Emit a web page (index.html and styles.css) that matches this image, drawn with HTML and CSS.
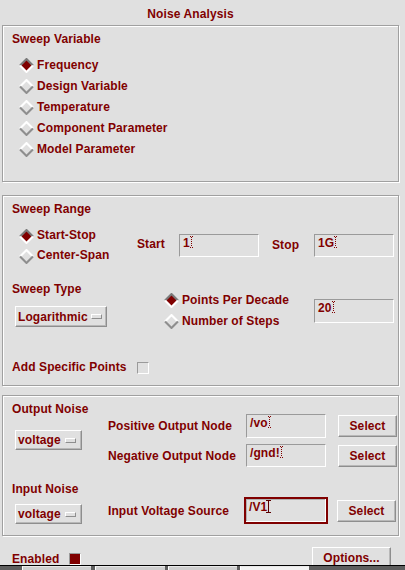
FILE: index.html
```html
<!DOCTYPE html>
<html>
<head>
<meta charset="utf-8">
<title>Noise Analysis</title>
<link rel="stylesheet" href="styles.css">
</head>
<body>
<div class="title">Noise Analysis</div>

<section class="frame f1">
  <div class="heading">Sweep Variable</div>
  <div class="radios var-list">
    <div class="radio on"><svg class="dia" viewBox="0 0 14 14"><polygon class="fill" points="7,1 13,7 7,13 1,7"/><polyline class="up" points="1,7 7,1 13,7"/><polyline class="dn" points="1,7 7,13 13,7"/></svg>Frequency</div>
    <div class="radio"><svg class="dia" viewBox="0 0 14 14"><polygon class="fill" points="7,1 13,7 7,13 1,7"/><polyline class="up" points="1,7 7,1 13,7"/><polyline class="dn" points="1,7 7,13 13,7"/></svg>Design Variable</div>
    <div class="radio"><svg class="dia" viewBox="0 0 14 14"><polygon class="fill" points="7,1 13,7 7,13 1,7"/><polyline class="up" points="1,7 7,1 13,7"/><polyline class="dn" points="1,7 7,13 13,7"/></svg>Temperature</div>
    <div class="radio"><svg class="dia" viewBox="0 0 14 14"><polygon class="fill" points="7,1 13,7 7,13 1,7"/><polyline class="up" points="1,7 7,1 13,7"/><polyline class="dn" points="1,7 7,13 13,7"/></svg>Component Parameter</div>
    <div class="radio"><svg class="dia" viewBox="0 0 14 14"><polygon class="fill" points="7,1 13,7 7,13 1,7"/><polyline class="up" points="1,7 7,1 13,7"/><polyline class="dn" points="1,7 7,13 13,7"/></svg>Model Parameter</div>
  </div>
</section>

<section class="frame f2">
  <div class="heading">Sweep Range</div>
  <div class="range-row">
    <div class="radios range-radios">
      <div class="radio r20 on"><svg class="dia" viewBox="0 0 14 14"><polygon class="fill" points="7,1 13,7 7,13 1,7"/><polyline class="up" points="1,7 7,1 13,7"/><polyline class="dn" points="1,7 7,13 13,7"/></svg>Start-Stop</div>
      <div class="radio r20"><svg class="dia" viewBox="0 0 14 14"><polygon class="fill" points="7,1 13,7 7,13 1,7"/><polyline class="up" points="1,7 7,1 13,7"/><polyline class="dn" points="1,7 7,13 13,7"/></svg>Center-Span</div>
    </div>
    <div class="range-fields">
      <span class="lbl lbl-start">Start</span>
      <div class="input w80 h23">1<svg class="cur" viewBox="0 0 5 13"><rect x="1" y="0" width="1" height="1"/><rect x="3" y="0" width="1" height="1"/><rect x="2" y="1" width="1" height="1"/><rect x="2" y="3" width="1" height="1"/><rect x="2" y="5" width="1" height="1"/><rect x="2" y="7" width="1" height="1"/><rect x="2" y="9" width="1" height="1"/><rect x="1" y="11" width="1" height="1"/><rect x="3" y="11" width="1" height="1"/></svg></div>
      <span class="lbl lbl-stop">Stop</span>
      <div class="input w80 h23">1G<svg class="cur" viewBox="0 0 5 13"><rect x="1" y="0" width="1" height="1"/><rect x="3" y="0" width="1" height="1"/><rect x="2" y="1" width="1" height="1"/><rect x="2" y="3" width="1" height="1"/><rect x="2" y="5" width="1" height="1"/><rect x="2" y="7" width="1" height="1"/><rect x="2" y="9" width="1" height="1"/><rect x="1" y="11" width="1" height="1"/><rect x="3" y="11" width="1" height="1"/></svg></div>
    </div>
  </div>

  <div class="type-row">
    <div class="type-left">
      <div class="heading">Sweep Type</div>
      <div class="dropdown dd-log">Logarithmic<span class="ind"></span></div>
    </div>
    <div class="radios type-radios">
      <div class="radio on"><svg class="dia" viewBox="0 0 14 14"><polygon class="fill" points="7,1 13,7 7,13 1,7"/><polyline class="up" points="1,7 7,1 13,7"/><polyline class="dn" points="1,7 7,13 13,7"/></svg>Points Per Decade</div>
      <div class="radio"><svg class="dia" viewBox="0 0 14 14"><polygon class="fill" points="7,1 13,7 7,13 1,7"/><polyline class="up" points="1,7 7,1 13,7"/><polyline class="dn" points="1,7 7,13 13,7"/></svg>Number of Steps</div>
    </div>
    <div class="input w80 h24 type-input">20<svg class="cur" viewBox="0 0 5 13"><rect x="1" y="0" width="1" height="1"/><rect x="3" y="0" width="1" height="1"/><rect x="2" y="1" width="1" height="1"/><rect x="2" y="3" width="1" height="1"/><rect x="2" y="5" width="1" height="1"/><rect x="2" y="7" width="1" height="1"/><rect x="2" y="9" width="1" height="1"/><rect x="1" y="11" width="1" height="1"/><rect x="3" y="11" width="1" height="1"/></svg></div>
  </div>

  <div class="add-row">
    <span class="add-lbl">Add Specific Points</span>
    <span class="check"></span>
  </div>
</section>

<section class="frame f3">
  <div class="noise-row">
    <div class="noise-left">
      <div class="heading">Output Noise</div>
      <div class="dropdown dd-volt dd-out">voltage<span class="ind"></span></div>
    </div>
    <div class="node-rows out-rows">
      <div class="node-row h24">
        <span class="node-lbl">Positive Output Node</span>
        <div class="input w80 h24">/vo<svg class="cur" viewBox="0 0 5 13"><rect x="1" y="0" width="1" height="1"/><rect x="3" y="0" width="1" height="1"/><rect x="2" y="1" width="1" height="1"/><rect x="2" y="3" width="1" height="1"/><rect x="2" y="5" width="1" height="1"/><rect x="2" y="7" width="1" height="1"/><rect x="2" y="9" width="1" height="1"/><rect x="1" y="11" width="1" height="1"/><rect x="3" y="11" width="1" height="1"/></svg></div>
        <div class="btn select">Select</div>
      </div>
      <div class="node-row h23 row-neg">
        <span class="node-lbl">Negative Output Node</span>
        <div class="input w80 h23">/gnd!<svg class="cur" viewBox="0 0 5 13"><rect x="1" y="0" width="1" height="1"/><rect x="3" y="0" width="1" height="1"/><rect x="2" y="1" width="1" height="1"/><rect x="2" y="3" width="1" height="1"/><rect x="2" y="5" width="1" height="1"/><rect x="2" y="7" width="1" height="1"/><rect x="2" y="9" width="1" height="1"/><rect x="1" y="11" width="1" height="1"/><rect x="3" y="11" width="1" height="1"/></svg></div>
        <div class="btn select">Select</div>
      </div>
    </div>
  </div>

  <div class="noise-row in-noise">
    <div class="noise-left">
      <div class="heading">Input Noise</div>
      <div class="dropdown dd-volt dd-in">voltage<span class="ind"></span></div>
    </div>
    <div class="node-rows in-rows">
      <div class="node-row h27">
        <span class="node-lbl">Input Voltage Source</span>
        <div class="input focus">/V1<svg class="ibeam" viewBox="0 0 5 13"><rect x="0" y="0" width="5" height="1"/><rect x="2" y="0" width="1" height="13"/><rect x="0" y="12" width="5" height="1"/></svg></div>
        <div class="btn select sel-in">Select</div>
      </div>
    </div>
  </div>
</section>

<div class="footer">
  <span class="enabled">Enabled</span>
  <span class="check on"></span>
  <div class="btn options">Options...</div>
</div>
<div class="strip">
  <span class="seg s1"></span>
  <span class="seg s2"></span>
  <span class="seg s3"></span>
  <span class="seg s4"></span>
</div>
</body>
</html>
```

FILE: styles.css
```css
* { box-sizing: border-box; }
html, body { margin: 0; padding: 0; }
body {
  width: 405px;
  height: 570px;
  overflow: hidden;
  background: #e0e0e0;
  color: #800000;
  font: bold 12px/14px "Liberation Sans", Arial, sans-serif;
  letter-spacing: 0.1px;
}
.title {
  height: 25px;
  padding: 7px 24px 0 0;
  text-align: center;
}
.frame {
  margin: 0 6px 0 2px;
  border: 1px solid #a0a0a0;
  box-shadow: inset 1px 1px 0 #fff, 1px 1px 0 #fff;
  padding: 6px 0 0 9px;
}
.f1 { height: 157px; }
.f2 { height: 191px; margin-top: 13px; }
.f3 { height: 141px; margin-top: 9px; }
.heading { line-height: 14px; white-space: nowrap; }

/* radios */
.radio {
  display: flex;
  align-items: center;
  height: 21px;
  white-space: nowrap;
}
.radio.r20 { height: 20px; }
.dia {
  width: 15px;
  height: 15px;
  margin: 2px 3px 0 -1px;
  flex: none;
}
.dia .fill { fill: none; }
.dia polyline { fill: none; stroke-width: 2; stroke-linejoin: miter; }
.dia .up { stroke: #ffffff; }
.dia .dn { stroke: #8e8e8e; }
.radio.on .dia .fill { fill: #800000; }
.radio.on .dia .up { stroke: #7a7a7a; }
.radio.on .dia .dn { stroke: #ffffff; }

.var-list { margin: 8px 0 0 8px; }

/* inputs */
.input {
  display: flex;
  align-items: flex-start;
  padding: 1px 0 0 3px;
  border: 1px solid;
  border-color: #9a9a9a #ffffff #ffffff #9a9a9a;
  white-space: nowrap;
  flex: none;
}
.w80 { width: 80px; }
.h23 { height: 23px; }
.h24 { height: 24px; }
.cur {
  width: 5px;
  height: 13px;
  margin: 0 0 0 -1px;
  fill: #800000;
  flex: none;
}
.input.focus {
  width: 84px;
  height: 27px;
  margin: 0 -2px;
  padding: 1px 0 0 3px;
  border: 2px solid #800000;
  box-shadow: inset -1px -1px 0 #ffffff, inset 1px 1px 0 #b0b0b0;
}
.ibeam {
  width: 5px;
  height: 13px;
  margin: 0 0 0 -1px;
  fill: #5a0000;
  flex: none;
}

/* sweep range */
.range-row {
  display: flex;
  margin: 9px 0 0 8px;
}
.range-radios { width: 117px; flex: none; }
.range-fields {
  display: flex;
  align-items: flex-start;
  margin-top: 9px;
}
.lbl { width: 42px; margin-top: 3px; flex: none; }
.lbl-stop { margin-left: 13px; margin-top: 4px; }

/* sweep type */
.type-row {
  display: flex;
  align-items: flex-start;
  margin-top: 17px;
}
.type-left { width: 153px; flex: none; }
.dropdown {
  display: flex;
  align-items: center;
  padding-left: 2px;
  border: 1px solid;
  border-color: #ffffff #8e8e8e #8e8e8e #ffffff;
  box-shadow: inset -1px -1px 0 #b8b8b8;
  white-space: nowrap;
}
.dd-log {
  width: 92px;
  height: 21px;
  margin: 10px 0 0 3px;
}
.ind {
  width: 11px;
  height: 5px;
  margin-left: 3px;
  border: 1px solid;
  border-color: #ffffff #8e8e8e #8e8e8e #ffffff;
  flex: none;
}
.type-radios { width: 149px; margin-top: 7px; flex: none; }
.type-input { margin-top: 17px; }

.add-row {
  display: flex;
  align-items: flex-start;
  margin-top: 29px;
}
.add-lbl { width: 125px; flex: none; white-space: nowrap; }
.check {
  width: 12px;
  height: 12px;
  margin-top: 2px;
  border: 1px solid;
  border-color: #9a9a9a #ffffff #ffffff #9a9a9a;
  flex: none;
}

/* noise frame */
.noise-row { display: flex; align-items: flex-start; }
.noise-left { width: 96px; flex: none; }
.dd-volt {
  width: 67px;
  height: 20px;
  margin-left: 3px;
}
.dd-volt .ind { margin-left: 4px; }
.dd-out { margin-top: 14px; }
.dd-in { margin-top: 8px; }
.out-rows { margin-top: 12px; }
.node-row { display: flex; align-items: center; }
.node-row.h24 { height: 24px; }
.node-row.h23 { height: 23px; }
.node-row.h27 { height: 27px; }
.row-neg { margin-top: 6px; }
.node-lbl { width: 138px; flex: none; white-space: nowrap; }
.btn {
  display: flex;
  align-items: center;
  justify-content: center;
  border: 1px solid;
  border-color: #ffffff #8e8e8e #8e8e8e #ffffff;
  box-shadow: inset -1px -1px 0 #b8b8b8;
  white-space: nowrap;
  flex: none;
}
.select {
  width: 59px;
  height: 22px;
  margin-left: 12px;
}
.sel-in { margin-left: 11px; margin-top: 1px; }
.in-noise { margin-top: 15px; }
.in-rows { margin-top: 15px; }

/* footer */
.footer {
  display: flex;
  align-items: flex-start;
  height: 18px;
  margin-top: 11px;
  padding-left: 12px;
  overflow: hidden;
}
.enabled { margin-top: 5px; }
.check.on {
  margin: 6px 0 0 10px;
  background: #800000;
}
.options {
  width: 79px;
  height: 24px;
  margin-left: auto;
  margin-right: 14px;
  align-items: flex-start;
  padding-top: 3px;
}
.strip {
  display: flex;
  height: 5px;
  border-top: 1px solid #000;
  background: #5e5e5e;
}
.seg {
  height: 4px;
  background: #cfcfcf;
  border-top: 1px solid #e8e8e8;
  border-left: 1px solid #ffffff;
}
.s1 { width: 69px; margin-left: 22px; }
.s2 { width: 70px; margin-left: 4px; }
.s3 { width: 69px; margin-left: 3px; }
.s4 { width: 69px; margin-left: 3px; background: #f2f2f2; }
```
